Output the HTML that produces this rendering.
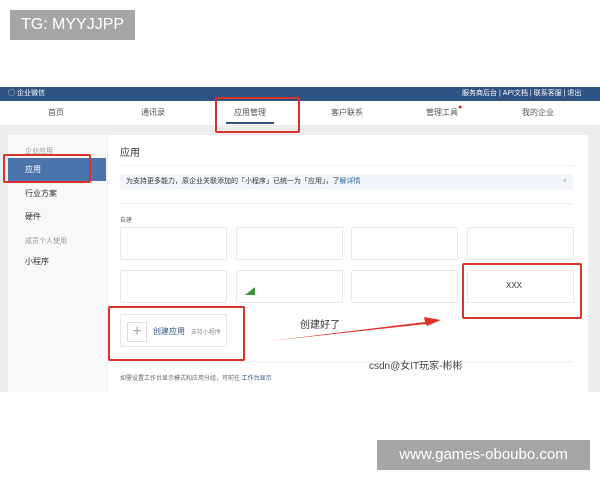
<!DOCTYPE html>
<html><head><meta charset="utf-8"><style>
*{margin:0;padding:0;box-sizing:border-box}
body{width:600px;height:480px;background:#fff;position:relative;overflow:hidden;font-family:"Liberation Sans","Noto Sans CJK SC",sans-serif;}
.a{position:absolute}
.lbl{background:#a6a6a6;color:#fff;font-size:16px;line-height:30px;text-align:center}
.hdr{left:0;top:87px;width:600px;height:14px;background:#2f5483;color:#fff;font-size:7px;line-height:14px}
.nav{left:0;top:101px;width:600px;height:24px;background:#fff;font-size:8px;color:#555;line-height:24px}
.gray{left:0;top:125px;width:600px;height:267px;background:#ededed}
.side{left:8px;top:135px;width:99px;height:257px;background:#f7f8fa}
.main{left:108px;top:135px;width:480px;height:257px;background:#fff}
.card{background:#fff;border:1px solid #e8e8e8;border-radius:2px}
.red{border:2px solid #d9342b;border-radius:2px}
.t{font-size:8px;color:#333}
</style></head><body>
<div class="a lbl" style="left:10px;top:10px;width:125px;height:30px">TG: MYYJJPP</div>
<div class="a lbl" style="left:377px;top:440px;width:213px;height:30px;font-size:15px">www.games-oboubo.com</div>

<div class="a hdr"><span class="a" style="left:8px;top:0">◯ 企业微信</span>
<span class="a" style="left:462px;top:0">服务商后台 | API文档 | 联系客服 | 退出</span></div>
<div class="a nav">
<span class="a" style="left:48px">首页</span>
<span class="a" style="left:141px">通讯录</span>
<span class="a" style="left:234px">应用管理</span>
<span class="a" style="left:331px">客户联系</span>
<span class="a" style="left:426px">管理工具<span style="color:#d22;font-size:7px;vertical-align:top;line-height:14px">●</span></span>
<span class="a" style="left:522px">我的企业</span>
<div class="a" style="left:226px;top:21px;width:48px;height:2px;background:#2f5483"></div>
</div>
<div class="a gray"></div>
<div class="a side">
<div class="a" style="left:17px;top:11px;font-size:7px;color:#999">企业应用</div>
<div class="a" style="left:0;top:23px;width:98px;height:23px;background:#4a74ab;color:#fff;font-size:8px;line-height:23px;padding-left:17px">应用</div>
<div class="a t" style="left:17px;top:53px">行业方案</div>
<div class="a t" style="left:17px;top:76px">硬件</div>
<div class="a" style="left:17px;top:101px;font-size:7px;color:#999">成员个人使用</div>
<div class="a t" style="left:17px;top:121px">小程序</div>
</div>
<div class="a main">
<div class="a" style="left:12px;top:9px;font-size:10px;color:#333">应用</div>
<div class="a" style="left:12px;top:30px;width:453px;height:1px;background:#eee"></div>
<div class="a" style="left:12px;top:39px;width:453px;height:15px;background:#f2f5f9;font-size:7px;line-height:15px;padding-left:6px;color:#333">为支持更多能力，原企业关联添加的「小程序」已统一为「应用」，了<span style="color:#2f6aa8">解详情</span><span style="position:absolute;right:6px;color:#999">×</span></div>
<div class="a" style="left:12px;top:68px;width:453px;height:1px;background:#eee"></div>
<div class="a" style="left:12px;top:80px;font-size:6px;color:#666">自建</div>
<div class="a card" style="left:12px;top:92px;width:107px;height:33px"></div>
<div class="a card" style="left:128px;top:92px;width:107px;height:33px"></div>
<div class="a card" style="left:243px;top:92px;width:107px;height:33px"></div>
<div class="a card" style="left:359px;top:92px;width:107px;height:33px"></div>
<div class="a card" style="left:12px;top:135px;width:107px;height:33px"></div>
<div class="a card" style="left:128px;top:135px;width:107px;height:33px"><div class="a" style="left:8px;top:16px;width:0;height:0;border-left:10px solid transparent;border-bottom:8px solid #3a9a3a"></div></div>
<div class="a card" style="left:243px;top:135px;width:107px;height:33px"></div>
<div class="a card" style="left:359px;top:135px;width:107px;height:33px"><span class="a" style="left:38px;top:10px;font-size:8px;color:#333">XXX</span></div>
<div class="a card" style="left:12px;top:179px;width:107px;height:33px">
<div class="a" style="left:6px;top:7px;width:20px;height:20px;border:1px solid #ddd;color:#aaa;font-size:16px;line-height:18px;text-align:center">+</div>
<span class="a" style="left:32px;top:11px;font-size:8px;color:#2f5483">创建应用 <span style="font-size:6px;color:#888">· 支持小程序</span></span></div>
<div class="a" style="left:12px;top:226px;width:453px;height:1px;background:#eee"></div>
<div class="a" style="left:12px;top:238px;font-size:6px;color:#666">如需设置工作台显示模式和应用分组，可前往 <span style="color:#2f5483">工作台显示</span></div>
</div>
<div class="a" style="left:300px;top:316px;font-size:10px;color:#333">创建好了</div>
<div class="a" style="left:369px;top:357px;font-size:10px;color:#444">csdn@女IT玩家-彬彬</div>
<svg class="a" style="left:0;top:0" width="600" height="480">
<polygon points="270,341 425,322 424,317 441,320 427,326 426,324" fill="#e03325"/>
</svg>
<div class="a red" style="left:215px;top:97px;width:85px;height:36px"></div>
<div class="a red" style="left:3px;top:154px;width:88px;height:29px"></div>
<div class="a red" style="left:108px;top:306px;width:137px;height:55px"></div>
<div class="a red" style="left:462px;top:263px;width:120px;height:56px"></div>
</body></html>
